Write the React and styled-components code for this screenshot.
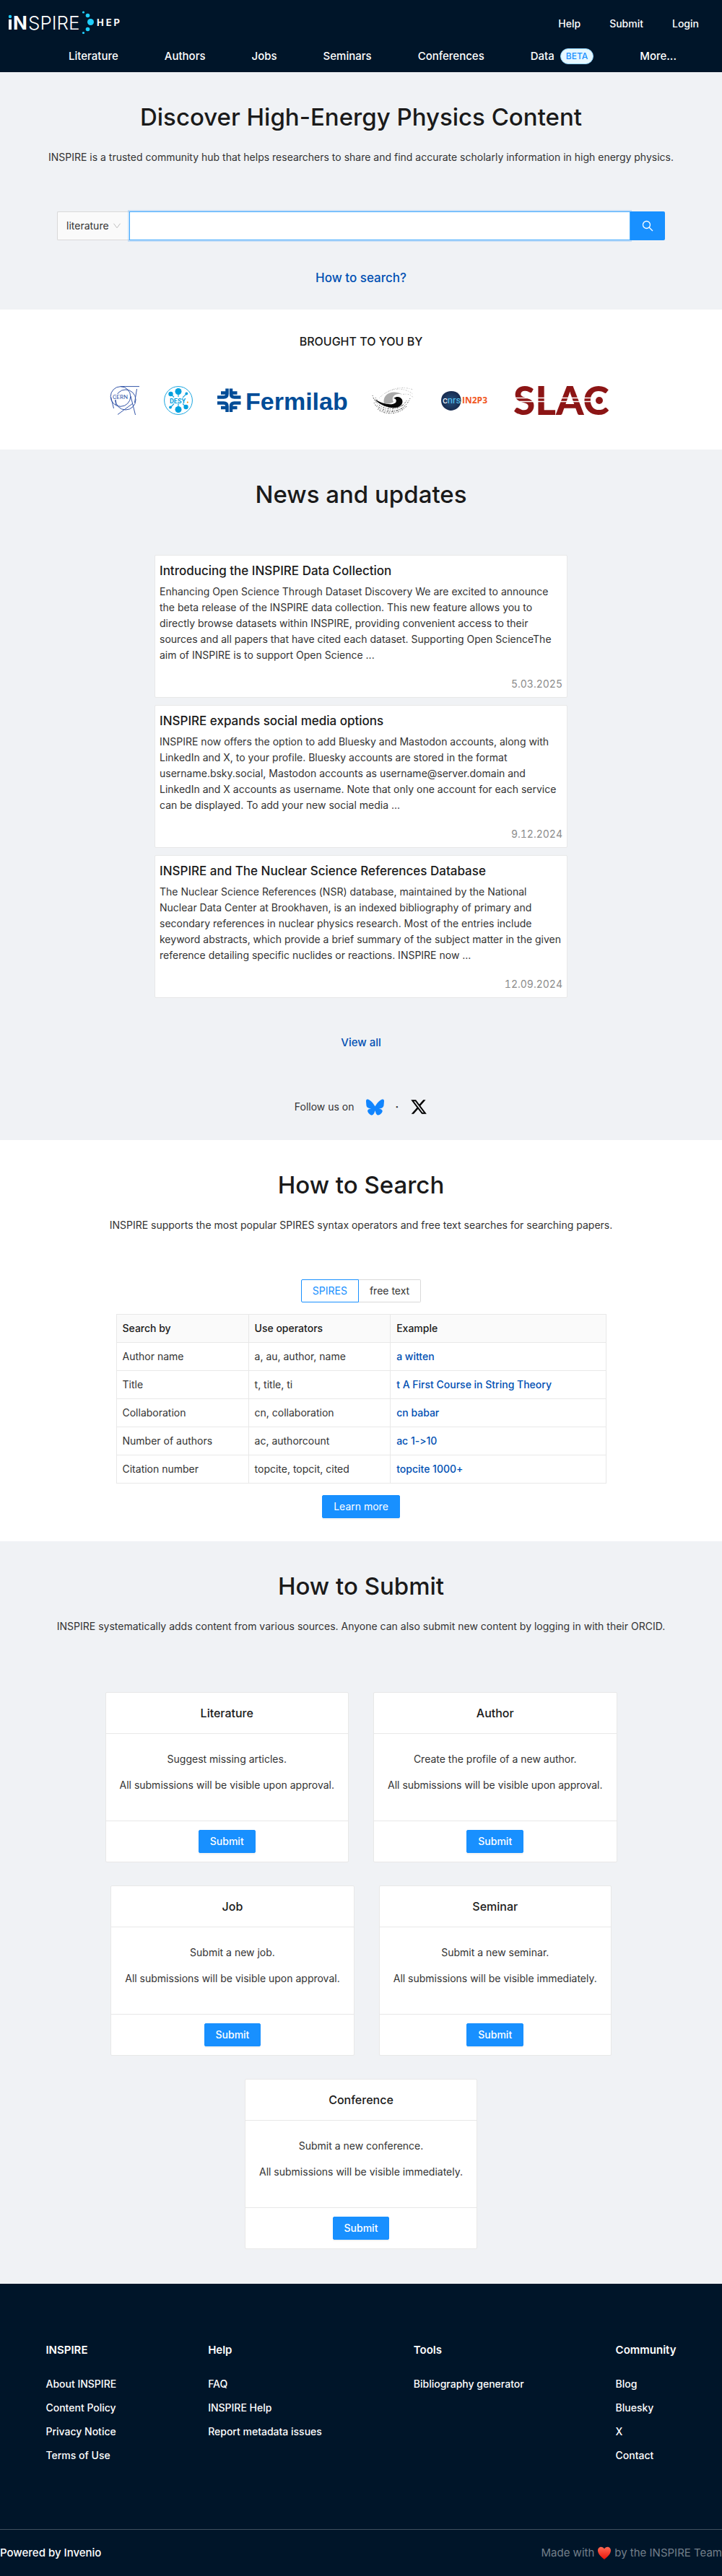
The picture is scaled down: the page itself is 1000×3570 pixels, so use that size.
import React, { useState } from "react";
import styled, { createGlobalStyle, css } from "styled-components";
import { FaBluesky, FaXTwitter } from "react-icons/fa6";

const color = {
  navy: "#001529",
  page: "#f0f2f5",
  white: "#ffffff",
  heading: "#1a1a1a",
  text: "#333333",
  muted: "#8c8c8c",
  border: "#e8e8e8",
  control: "#d9d9d9",
  primary: "#1890ff",
  link: "#0050b3",
};

const GlobalStyle = createGlobalStyle`
  *, *::before, *::after { box-sizing: border-box; }
  body {
    margin: 0;
    background: ${color.page};
    color: ${color.text};
    font-family: Inter, "Liberation Sans", sans-serif;
    font-size: 14px;
    font-feature-settings: "calt" 0;
    line-height: 22px;
  }
  h1, h2, h3, p, ul { margin: 0; padding: 0; }
  ul { list-style: none; }
  a { text-decoration: none; }
  button, input, select { font: inherit; }
  svg { overflow: visible; }
`;

/* Header */
const Header = styled.header`
  background: ${color.navy};
`;
const TopBar = styled.div`
  display: flex;
  justify-content: space-between;
  align-items: center;
  height: 64px;
  padding: 2px 32px 0 12px;
`;
const TopLinks = styled.nav`
  display: flex;
  gap: 40px;
`;
const HeaderLink = styled.a`
  display: flex;
  align-items: center;
  gap: 8px;
  color: ${color.white};
  font-weight: 500;
  ${(p) => p.$large && css`font-size: 15px;`}
`;
const MainNav = styled.nav`
  display: flex;
  justify-content: center;
  gap: 64px;
  height: 36px;
  padding: 2px 0 10px 32px;
`;
const Beta = styled.span`
  border: 1px solid #91d5ff;
  border-radius: 12px;
  background: #e6f7ff;
  color: ${color.primary};
  font-size: 12px;
  font-weight: 500;
  line-height: 20px;
  padding: 0 7px;
`;

/* Sections */
const Section = styled.section`
  display: flex;
  flex-direction: column;
  align-items: center;
  padding: 40px 24px ${(p) => p.$bottom}px;
  background: ${(p) => (p.$plain ? color.white : color.page)};
`;
const Title = styled.h2`
  color: ${color.heading};
  font-size: 33px;
  font-weight: 500;
  line-height: 44px;
  text-align: center;
`;
const Description = styled.p`
  margin: 23px 0 64px;
  text-align: center;
`;
const BigLink = styled.a`
  margin-top: ${(p) => p.$top}px;
  color: ${color.link};
  font-size: ${(p) => (p.$small ? 15 : 17)}px;
  font-weight: 500;
  line-height: 24px;
`;

/* Search */
const SearchForm = styled.form`
  display: flex;
  width: 100%;
  max-width: 842px;
  height: 40px;
`;
const ScopeBox = styled.label`
  display: flex;
  align-items: center;
  width: 100px;
  padding: 0 12px;
  border: 1px solid ${color.control};
  border-right: 0;
  border-radius: 2px 0 0 2px;
  background: #fafafa;
`;
const Scope = styled.select`
  flex: 1;
  min-width: 0;
  padding: 0;
  border: 0;
  background: transparent;
  color: ${color.text};
  appearance: none;
  outline: none;
`;
const Query = styled.input`
  flex: 1;
  min-width: 0;
  border: 1px solid #40a9ff;
  background: ${color.white};
  box-shadow: 0 0 0 2px rgba(24, 144, 255, 0.2);
  padding: 0 11px;
  outline: none;
`;
const SearchButton = styled.button`
  display: flex;
  align-items: center;
  justify-content: center;
  width: 48px;
  border: 0;
  border-radius: 0 2px 2px 0;
  background: ${color.primary};
  color: ${color.white};
`;

/* Partners */
const Partners = styled.section`
  padding: 32px 24px 48px;
  background: ${color.white};
`;
const PartnersTitle = styled.h2`
  color: ${color.heading};
  font-size: 16px;
  font-weight: 500;
  line-height: 24px;
  text-align: center;
`;
const LogoRow = styled.div`
  display: flex;
  flex-wrap: wrap;
  justify-content: center;
  gap: 34px;
  margin-top: 50px;
`;
const LogoLink = styled.a`
  display: flex;
  height: 40px;
`;

/* News */
const NewsList = styled.div`
  display: flex;
  flex-direction: column;
  gap: 10px;
  width: 100%;
  max-width: 572px;
  margin-top: 62px;
`;
const NewsCard = styled.article`
  padding: 8px 6px 7px;
  border: 1px solid ${color.border};
  border-radius: 2px;
  background: ${color.white};
`;
const NewsTitle = styled.h3`
  margin-bottom: 5px;
  font-size: 17px;
  font-weight: 500;
  line-height: 26px;
`;
const NewsLink = styled.a`
  color: ${color.heading};
`;
const NewsDate = styled.p`
  margin-top: 18px;
  color: ${color.muted};
  font-feature-settings: "tnum";
  text-align: right;
`;
const Follow = styled.div`
  display: flex;
  align-items: center;
  gap: 16px;
  height: 24px;
  margin-top: 65px;
`;
const SocialLink = styled.a`
  display: flex;
  color: ${(p) => p.$color};
`;

/* How to search */
const Segments = styled.fieldset`
  display: flex;
  margin: 0 0 16px;
  padding: 0;
  border: 0;
`;
const Segment = styled.label`
  padding: 0 15px;
  border: 1px solid ${(p) => (p.$active ? color.primary : color.control)};
  color: ${(p) => (p.$active ? color.primary : color.text)};
  line-height: 30px;
  cursor: pointer;
  &:first-of-type { border-radius: 2px 0 0 2px; ${(p) => !p.$active && css`border-right: 0;`} }
  &:last-of-type { border-radius: 0 2px 2px 0; ${(p) => !p.$active && css`border-left: 0;`} }
`;
const SegmentInput = styled.input`
  appearance: none;
  width: 0;
  height: 0;
  margin: 0;
  position: absolute;
`;
const Table = styled.table`
  width: 100%;
  max-width: 679px;
  border-collapse: collapse;
  table-layout: fixed;
  margin-bottom: 16px;
`;
const HeadCell = styled.th`
  width: ${(p) => p.$width};
  height: 39px;
  padding: 8px;
  border: 1px solid ${color.border};
  background: #fafafa;
  color: ${color.heading};
  font-weight: 500;
  text-align: left;
`;
const Cell = styled.td`
  height: 39px;
  padding: 8px;
  border: 1px solid ${color.border};
`;
const CellLink = styled.a`
  color: ${color.link};
  font-weight: 500;
`;
const Button = styled.button`
  height: 32px;
  padding: 0 15px;
  border: 1px solid ${color.primary};
  border-radius: 2px;
  background: ${color.primary};
  box-shadow: 0 2px 0 rgba(0, 0, 0, 0.045);
  color: ${color.white};
  line-height: 30px;
  cursor: pointer;
  ${(p) => p.$strong && css`font-weight: 500;`}
`;

/* How to submit */
const SubmitGrid = styled.div`
  display: flex;
  flex-wrap: wrap;
  justify-content: center;
  gap: 32px 34px;
  max-width: 760px;
  margin-top: 16px;
`;
const SubmitCard = styled.article`
  border: 1px solid ${color.border};
  border-radius: 2px;
  background: ${color.white};
  text-align: center;
`;
const SubmitTitle = styled.h3`
  padding: 16px 20px;
  border-bottom: 1px solid ${color.border};
  color: ${color.heading};
  font-size: 16px;
  font-weight: 500;
  line-height: 24px;
`;
const SubmitBody = styled.div`
  display: grid;
  gap: 14px;
  padding: 24px 19px 38px;
`;
const SubmitFooter = styled.div`
  padding: 12px;
  border-top: 1px solid ${color.border};
`;

/* Footer */
const Footer = styled.footer`
  background: ${color.navy};
  color: ${color.white};
`;
const FooterColumns = styled.div`
  display: flex;
  flex-wrap: wrap;
  justify-content: space-around;
  padding: 80px 0 91px;
`;
const FooterTitle = styled.h3`
  margin-bottom: 24px;
  font-size: 15px;
  font-weight: 600;
  line-height: 24px;
`;
const FooterList = styled.ul`
  display: grid;
  gap: 11px;
`;
const FooterLink = styled.a`
  color: ${color.white};
  font-weight: 500;
`;
const FooterBar = styled.div`
  display: flex;
  justify-content: space-between;
  padding: 20px 0;
  border-top: 1px solid #404f5e;
  font-size: 15px;
  line-height: 24px;
`;
const Credit = styled.span`
  display: flex;
  align-items: center;
  gap: 4px;
  color: #737f8a;
`;

const InspireLogo = () => (
  <svg width="160" height="36" viewBox="0 0 160 36" role="img" aria-label="INSPIRE HEP">
    <g fill="#fff">
      <rect x="0" y="12" width="4" height="14" />
      <text x="6" y="26" fontFamily="Inter" fontWeight="700" fontSize="26">N</text>
      <text x="27" y="26" fontFamily="Inter" fontWeight="300" fontSize="26">SPIRE</text>
      <text x="122" y="21" fontFamily="Inter" fontWeight="700" fontSize="13" letterSpacing="3">HEP</text>
    </g>
    <g fill="#1fd0ff">
      <circle cx="2" cy="8" r="2.2" />
      <circle cx="103.500" cy="2" r="1.6" />
      <circle cx="109.500" cy="6.500" r="2.8" />
      <circle cx="113.500" cy="15.500" r="4.500" />
      <circle cx="109.500" cy="25.500" r="2.8" />
      <circle cx="103.500" cy="30.500" r="1.6" />
    </g>
  </svg>
);

const CernLogo = () => (
  <svg width="40" height="40" viewBox="0 0 40 40" fill="none" stroke="#3355a8" strokeWidth="1" role="img" aria-label="CERN">
    <circle cx="14" cy="14.500" r="13.800" />
    <circle cx="21" cy="19" r="14" />
    <path d="M14 .6H40M0.500 15L4.500 31M36.500 4L33.500 23 M28 14L34.500 40M31 24L10 39.500M6.500 19.500L8 27" />
    <text x="3" y="17.500" fontFamily="Lato" fontSize="8" fill="#3355a8" stroke="#fff" strokeWidth="2" paintOrder="stroke">CERN</text>
  </svg>
);

const DesyLogo = () => (
  <svg width="40" height="40" viewBox="0 0 40 40" role="img" aria-label="DESY">
    <circle cx="20" cy="20" r="19.400" fill="none" stroke="#18a5e0" />
    <g stroke="#18a5e0" strokeWidth="1.200">
      <path d="M20 7V15M9.500 11L14 15.500M31.500 10.500L26 16M20 32V24M30.500 29L26 24.500M9 30L14 24.500" />
    </g>
    <g fill="#00a0de">
      <circle cx="20" cy="7.500" r="4.500" />
      <circle cx="9.500" cy="11" r="3.200" />
      <circle cx="31.300" cy="10.500" r="1.900" />
      <circle cx="20" cy="32.500" r="4.500" />
      <circle cx="30.500" cy="29" r="3.200" />
      <circle cx="9" cy="29.500" r="1.900" />
      <text x="8" y="23.500" fontFamily="Roboto" fontWeight="700" fontSize="9">DESY</text>
    </g>
    <circle cx="32.800" cy="22.500" r="1" fill="#f28c00" />
  </svg>
);

const FermilabLogo = () => (
  <svg width="180" height="40" viewBox="0 0 180 40" role="img" aria-label="Fermilab">
    <g fill="none" stroke="#004c97" strokeWidth="4.500">
      <path d="M13.500 3.500V11Q13.500 15.500 9 15.500H0" />
      <path d="M19 3.500V11Q19 15.500 23.500 15.500H32.500" />
      <path d="M13.500 36V28Q13.500 23.500 9 23.500H0" />
      <path d="M19 36V28Q19 23.500 23.500 23.500H32.500" />
      <path d="M5 9.500H12M20.500 9.500H27.500M5 30H12M20.500 30H27.500" />
    </g>
    <text x="39" y="33" fontFamily="Liberation Sans" fontWeight="700" fontSize="34" fill="#004c97">Fermilab</text>
  </svg>
);

const IhepLogo = () => (
  <svg width="60" height="40" viewBox="0 0 60 40" fill="none" role="img" aria-label="IHEP">
    <g stroke="#888" strokeWidth=".9" strokeDasharray="1 2 2 1.500">
      <path d="M10 17C22 4 40 -1 57 5M19 10C33 1 47 3 58 12M40 12C50 10 55 12 57 16" opacity=".55" />
      <path d="M1 13C6 33 37 40 49 19M3 23C12 42 43 40 53 17M8 32C20 42 40 38 48 28" stroke="#444" />
      <path d="M5 16C12 29 30 34 44 26M7 27C18 36 34 37 45 29" stroke="#444" />
    </g>
    <path d="M17 24C14 12 27 4 42 11C32 10 26 15 30 22C26 25 20 25 17 24Z" fill="#aaa" />
    <path d="M30 17C38 11 46 19 41 26C34 34 15 30 3 18C13 24 27 28 33 23C35 20 33 17 30 17Z" fill="#080808" />
  </svg>
);

const CnrsLogo = () => (
  <svg width="68" height="40" viewBox="0 0 68 40" role="img" aria-label="CNRS IN2P3">
    <defs>
      <radialGradient id="cnrs">
        <stop offset="0" stopColor="#24517f" />
        <stop offset="1" stopColor="#182b4f" />
      </radialGradient>
    </defs>
    <path d="M16 7C25 7 30 13 29.500 21C29 29 22 34 15 34C8 33 2 28 2 20C2 12 8 7 16 7Z" fill="url(#cnrs)" />
    <text x="4" y="24" fontFamily="Roboto" fontSize="13" fill="#fff">c<tspan fill="#5bc5f2">nrs</tspan></text>
    <text x="31" y="24" fontFamily="Open Sans" fontWeight="700" fontSize="12" fill="#f0561d">IN2P3</text>
  </svg>
);

const SlacLogo = () => (
  <svg width="136" height="40" viewBox="0 0 136 40" role="img" aria-label="SLAC">
    <text x="0" y="39.500" fontFamily="Lato" fontWeight="900" fontSize="55" fill="#8c1515">SLAC</text>
    <circle cx="119" cy="20" r="5" fill="#8c1515" />
    <path d="M0 16.500H110M0 21.500H110" stroke="#fff" strokeWidth="1.500" />
  </svg>
);

const Heart = () => (
  <svg width="20" height="20" viewBox="0 0 20 20" role="img" aria-label="love">
    <defs>
      <linearGradient id="heart" x2="0" y2="1">
        <stop offset="0" stopColor="#ff6a55" />
        <stop offset="1" stopColor="#e81208" />
      </linearGradient>
    </defs>
    <path d="M10 19C5 15 1 11 1 6.500C1 1 8 0 10 4.500C12 0 19 1 19 6.500C19 11 15 15 10 19Z" fill="url(#heart)" />
  </svg>
);

const partners = [CernLogo, DesyLogo, FermilabLogo, IhepLogo, CnrsLogo, SlacLogo];

const news = [
  {
    title: "Introducing the INSPIRE Data Collection",
    text: "Enhancing Open Science Through Dataset Discovery We are excited to announce the beta release of the INSPIRE data collection. This new feature allows you to directly browse datasets within INSPIRE, providing convenient access to their sources and all papers that have cited each dataset. Supporting Open ScienceThe aim of INSPIRE is to support Open Science ...",
    date: "5.03.2025",
  },
  {
    title: "INSPIRE expands social media options",
    text: "INSPIRE now offers the option to add Bluesky and Mastodon accounts, along with LinkedIn and X, to your profile. Bluesky accounts are stored in the format username.bsky.social, Mastodon accounts as username@server.domain and LinkedIn and X accounts as username. Note that only one account for each service can be displayed. To add your new social media ...",
    date: "9.12.2024",
  },
  {
    title: "INSPIRE and The Nuclear Science References Database",
    text: "The Nuclear Science References (NSR) database, maintained by the National Nuclear Data Center at Brookhaven, is an indexed bibliography of primary and secondary references in nuclear physics research. Most of the entries include keyword abstracts, which provide a brief summary of the subject matter in the given reference detailing specific nuclides or reactions. INSPIRE now ...",
    date: "12.09.2024",
  },
];

const operators = [
  ["Author name", "a, au, author, name", "a witten"],
  ["Title", "t, title, ti", "t A First Course in String Theory"],
  ["Collaboration", "cn, collaboration", "cn babar"],
  ["Number of authors", "ac, authorcount", "ac 1->10"],
  ["Citation number", "topcite, topcit, cited", "topcite 1000+"],
];

const submissions = [
  ["Literature", "Suggest missing articles.", "upon approval"],
  ["Author", "Create the profile of a new author.", "upon approval"],
  ["Job", "Submit a new job.", "upon approval"],
  ["Seminar", "Submit a new seminar.", "immediately"],
  ["Conference", "Submit a new conference.", "immediately"],
];

const footerColumns = [
  ["INSPIRE", ["About INSPIRE", "Content Policy", "Privacy Notice", "Terms of Use"]],
  ["Help", ["FAQ", "INSPIRE Help", "Report metadata issues"]],
  ["Tools", ["Bibliography generator"]],
  ["Community", ["Blog", "Bluesky", "X", "Contact"]],
];

export default function App() {
  const [syntax, setSyntax] = useState("SPIRES");
  return (
    <>
      <GlobalStyle />
      <Header>
        <TopBar>
          <HeaderLink href="#home"><InspireLogo /></HeaderLink>
          <TopLinks>
            {["Help", "Submit", "Login"].map((t) => (
              <HeaderLink key={t} href={`#${t}`}>{t}</HeaderLink>
            ))}
          </TopLinks>
        </TopBar>
        <MainNav>
          {["Literature", "Authors", "Jobs", "Seminars", "Conferences", "Data", "More..."].map((t) => (
            <HeaderLink $large key={t} href={`#${t}`}>
              {t}
              {t === "Data" && <Beta>BETA</Beta>}
            </HeaderLink>
          ))}
        </MainNav>
      </Header>

      <main>
        <Section $bottom={32}>
          <Title as="h1">Discover High-Energy Physics Content</Title>
          <Description>
            INSPIRE is a trusted community hub that helps researchers to share and find accurate scholarly information in high energy physics.
          </Description>
          <SearchForm onSubmit={(e) => e.preventDefault()}>
            <ScopeBox>
              <Scope aria-label="Search in" defaultValue="literature">
                <option>literature</option>
                <option>authors</option>
                <option>jobs</option>
              </Scope>
              <svg width="10" height="8" viewBox="0 0 10 8" fill="none" stroke="#bfbfbf" aria-hidden="true">
                <path d="M.5 .8L5 6.800L9.500 .8" />
              </svg>
            </ScopeBox>
            <Query type="text" aria-label="Search" />
            <SearchButton type="submit" aria-label="Search">
              <svg width="16" height="16" viewBox="0 0 16 16" fill="none" stroke="currentColor" strokeWidth="1.300" aria-hidden="true">
                <circle cx="6.500" cy="6.500" r="5" />
                <path d="M10.200 10.200L15 15" />
              </svg>
            </SearchButton>
          </SearchForm>
          <BigLink href="#how-to-search" $top={40}>How to search?</BigLink>
        </Section>

        <Partners>
          <PartnersTitle>BROUGHT TO YOU BY</PartnersTitle>
          <LogoRow>
            {partners.map((Logo, i) => (
              <LogoLink key={i} href="#partner"><Logo /></LogoLink>
            ))}
          </LogoRow>
        </Partners>

        <Section $bottom={34}>
          <Title>News and updates</Title>
          <NewsList>
            {news.map((n) => (
              <NewsCard key={n.title}>
                <NewsTitle><NewsLink href="#news">{n.title}</NewsLink></NewsTitle>
                <p>{n.text}</p>
                <NewsDate>{n.date}</NewsDate>
              </NewsCard>
            ))}
          </NewsList>
          <BigLink href="#all-news" $top={50} $small>View all</BigLink>
          <Follow>
            <span>Follow us on</span>
            <SocialLink href="#bluesky" aria-label="Bluesky" $color="#1185fe"><FaBluesky size={25} /></SocialLink>
            <b>·</b>
            <SocialLink href="#x" aria-label="X" $color="#000000"><FaXTwitter size={24} /></SocialLink>
          </Follow>
        </Section>

        <Section $plain $bottom={32} id="how-to-search">
          <Title>How to Search</Title>
          <Description>
            INSPIRE supports the most popular SPIRES syntax operators and free text searches for searching papers.
          </Description>
          <Segments aria-label="Search syntax">
            {["SPIRES", "free text"].map((s) => (
              <Segment key={s} $active={s === syntax}>
                <SegmentInput type="radio" name="syntax" checked={s === syntax} onChange={() => setSyntax(s)} />
                {s}
              </Segment>
            ))}
          </Segments>
          <Table>
            <thead>
              <tr>
                <HeadCell $width="27%">Search by</HeadCell>
                <HeadCell $width="29%">Use operators</HeadCell>
                <HeadCell>Example</HeadCell>
              </tr>
            </thead>
            <tbody>
              {operators.map(([name, ops, example]) => (
                <tr key={name}>
                  <Cell>{name}</Cell>
                  <Cell>{ops}</Cell>
                  <Cell><CellLink href="#example">{example}</CellLink></Cell>
                </tr>
              ))}
            </tbody>
          </Table>
          <Button type="button">Learn more</Button>
        </Section>

        <Section $bottom={48}>
          <Title>How to Submit</Title>
          <Description>
            INSPIRE systematically adds content from various sources. Anyone can also submit new content by logging in with their ORCID.
          </Description>
          <SubmitGrid>
            {submissions.map(([title, text, when]) => (
              <SubmitCard key={title}>
                <SubmitTitle>{title}</SubmitTitle>
                <SubmitBody>
                  <p>{text}</p>
                  <p>All submissions will be visible {when}.</p>
                </SubmitBody>
                <SubmitFooter><Button type="button" $strong>Submit</Button></SubmitFooter>
              </SubmitCard>
            ))}
          </SubmitGrid>
        </Section>
      </main>

      <Footer>
        <FooterColumns>
          {footerColumns.map(([title, links]) => (
            <div key={title}>
              <FooterTitle>{title}</FooterTitle>
              <FooterList>
                {links.map((l) => (
                  <li key={l}><FooterLink href="#footer">{l}</FooterLink></li>
                ))}
              </FooterList>
            </div>
          ))}
        </FooterColumns>
        <FooterBar>
          <FooterLink href="#invenio">Powered by Invenio</FooterLink>
          <Credit>Made with <Heart /> by the INSPIRE Team</Credit>
        </FooterBar>
      </Footer>
    </>
  );
}
